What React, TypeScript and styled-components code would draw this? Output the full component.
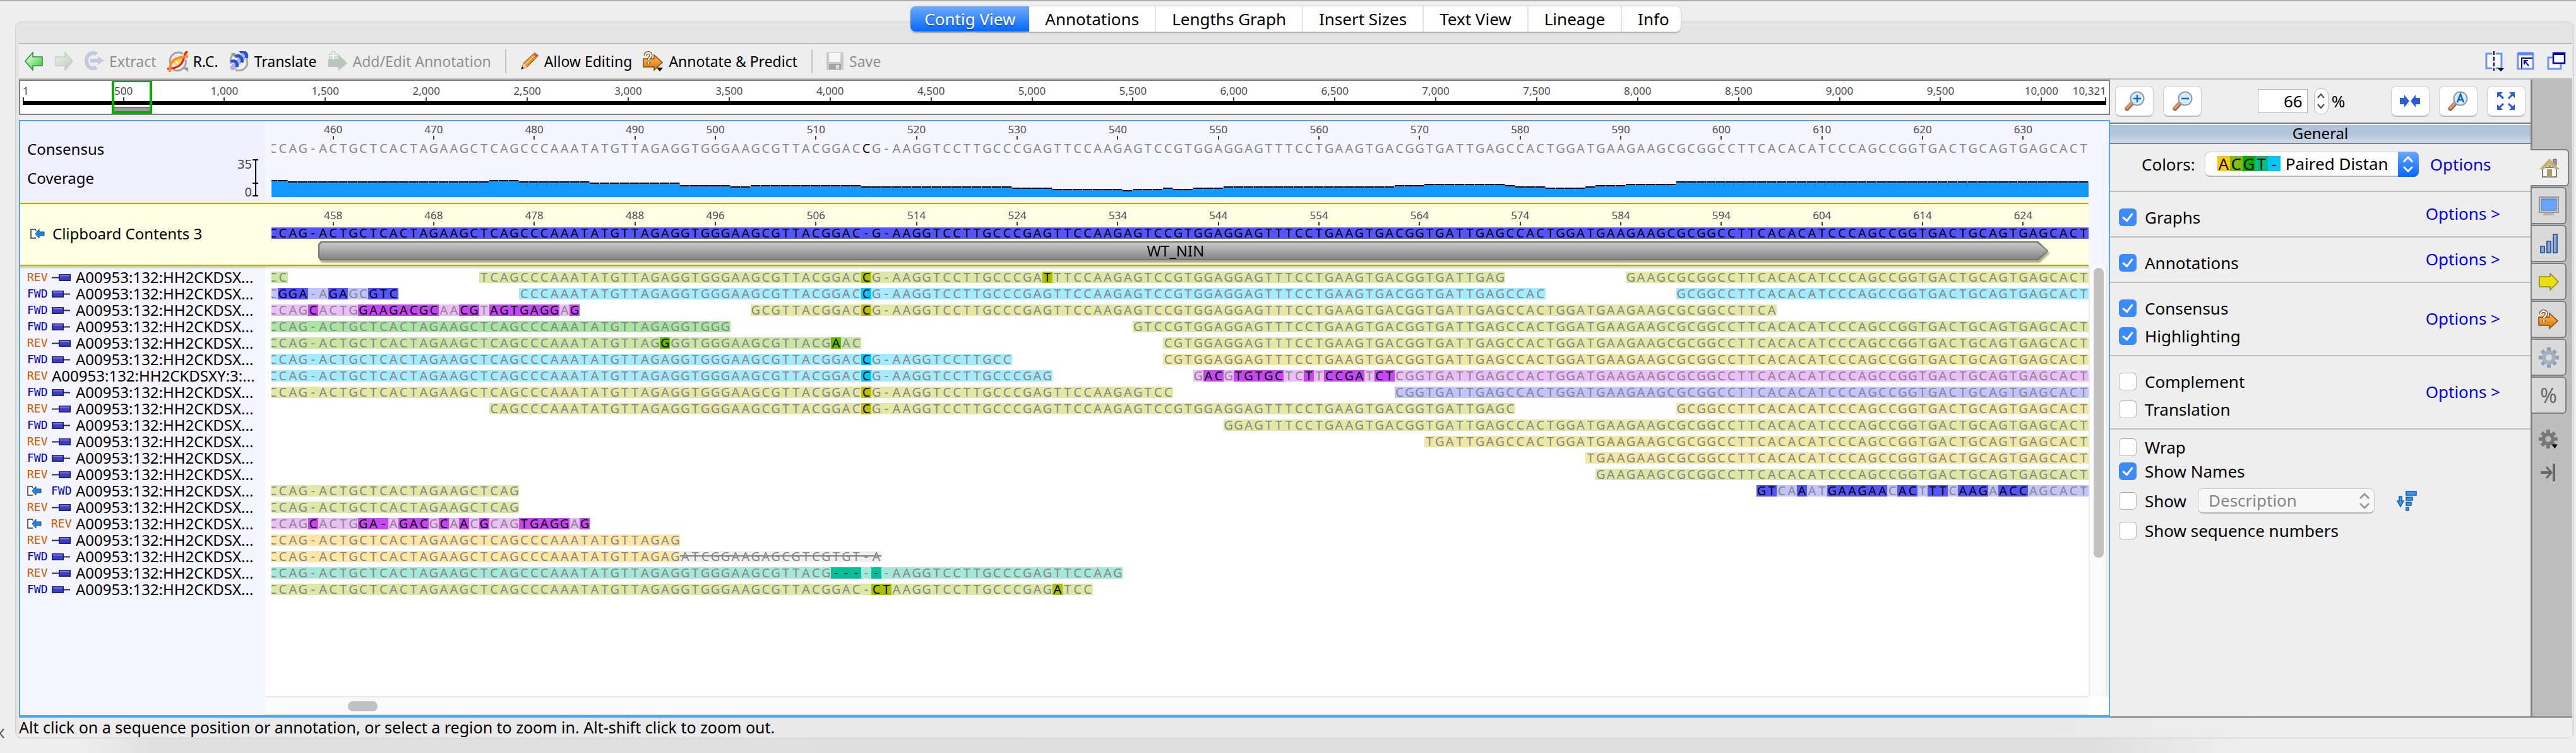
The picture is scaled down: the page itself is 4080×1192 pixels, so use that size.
import React from "react";
import styled, { createGlobalStyle, css } from "styled-components";

/* ---------- sequence data ---------- */

const CONSENSUS =
  "CCAG-ACTGCTCACTAGAAGCTCAGCCCAAATATGTTAGAGGTGGGAAGCGTTACGGACC" +
  "G-AAGGTCCTTGCCCGAGTTCCAAGAGTCCGTGGAGGAGTTTCCTGAAGTGACGGTGATT" +
  "GAGCCACTGGATGAAGAAGCGCGGCCTTCACACATCCCAGCCGGTGACTGCAGTGAGCAC" +
  "T";
const LENGTH = CONSENSUS.length;
const SNP = 59;

const REFERENCE = CONSENSUS.slice(0, SNP) + "-" + CONSENSUS.slice(SNP + 1);

type Range = [number, number];
type Edit = [number, string];
type Tone = { soft: string; hard: string };
type Piece = { at: number; bases: string; tone: Tone; marks: Range[]; trimmed?: boolean };

const tone = (soft: string, hard: string): Tone => ({ soft, hard });
const CYAN = tone("#a5ebff", "#00c8ff");
const VIOLET = tone("#c3c3ff", "#5555ff");
const PURPLE = tone("#ebbef9", "#c547f3");
const GREEN = tone("#a9e4a5", "#1cb400");
const LIME = tone("#c9e6a4", "#66b800");
const LEAF = tone("#dde8a6", "#aabf00");
const MOSS = tone("#e4e8a5", "#bcbf00");
const SAND = tone("#ede8a4", "#d0c000");
const STRAW = tone("#f1e8a5", "#dcc000");
const AMBER = tone("#fee7a3", "#ffc000");
const TEAL = tone("#a5e8da", "#00c09c");
const GREY = tone("#f0f0f0", "#d0d0d0");

// A piece that follows the consensus from one column to another, with a few changed bases.
const follow = (from: number, to: number, t: Tone, edits: Edit[] = [], marks: Range[] = []): Piece => {
  const bases = CONSENSUS.slice(from, to + 1).split("");
  edits.forEach(([at, text]) => text.split("").forEach((b, i) => (bases[at - from + i] = b)));
  return { at: from, bases: bases.join(""), tone: t, marks };
};
const piece = (at: number, bases: string, t: Tone, marks: Range[] = []): Piece => ({ at, bases, tone: t, marks });

const END = LENGTH - 1;
const snp: Range[] = [[SNP, SNP]];
const NAME = "A00953:132:HH2CKDSX...";

type Read = { dir: "FWD" | "REV"; pin?: boolean; linked?: boolean; name?: string; pieces: Piece[] };

const READS: Read[] = [
  { dir: "REV", pin: true, pieces: [follow(0, 1, LIME), follow(21, 122, LEAF, [[77, "T"]], [[59, 59], [77, 77]]), follow(135, END, MOSS)] },
  { dir: "FWD", pin: true, pieces: [piece(0, "CGGA-AGAGCGTC", VIOLET, [[1, 3], [6, 7], [10, 12]]), follow(25, 126, CYAN, [], snp), follow(140, END, CYAN)] },
  { dir: "FWD", pin: true, pieces: [piece(0, "CCAGCACTGGAAGACGCAACGTAGTGAGGAG", PURPLE, [[4, 4], [9, 16], [19, 20], [22, 28], [30, 30]]), follow(48, 149, MOSS, [], snp)] },
  { dir: "FWD", pin: true, pieces: [follow(0, 45, GREEN), follow(86, END, LEAF)] },
  { dir: "REV", pin: true, pieces: [follow(0, 58, LIME, [[39, "G"], [56, "AAC"]], [[39, 39], [56, 56]]), follow(89, END, MOSS)] },
  { dir: "FWD", pin: true, pieces: [follow(0, 73, CYAN, [], snp), follow(89, END, SAND)] },
  { dir: "REV", name: "A00953:132:HH2CKDSXY:3:...", pieces: [follow(0, 77, CYAN, [], snp), follow(92, END, PURPLE, [[92, "GACGTGTGCTCTTCCGATCT"]], [[93, 94], [96, 100], [103, 103], [105, 108], [110, 111]])] },
  { dir: "FWD", pin: true, pieces: [follow(0, 89, MOSS, [], snp), follow(112, END, VIOLET)] },
  { dir: "REV", pin: true, pieces: [follow(22, 123, MOSS, [], snp), follow(140, END, STRAW)] },
  { dir: "FWD", pin: true, pieces: [follow(95, END, MOSS)] },
  { dir: "REV", pin: true, pieces: [follow(115, END, SAND)] },
  { dir: "FWD", pin: true, pieces: [follow(131, END, STRAW)] },
  { dir: "REV", pin: true, pieces: [follow(132, END, LEAF)] },
  { dir: "FWD", linked: true, pieces: [follow(0, 24, MOSS), piece(148, "GTCAAATGAAGAACACTTTCAAGAACCAGCACT", VIOLET, [[148, 149], [152, 152], [155, 160], [162, 163], [165, 166], [168, 170], [172, 174]])] },
  { dir: "REV", pin: true, pieces: [follow(0, 24, LEAF)] },
  { dir: "REV", linked: true, pieces: [piece(0, "CCAGCACTGGA-AGACGCAACGCAGTGAGGAG", PURPLE, [[4, 4], [9, 11], [13, 15], [17, 17], [19, 19], [21, 21], [25, 29], [31, 31]])] },
  { dir: "REV", pin: true, pieces: [follow(0, 40, AMBER)] },
  { dir: "FWD", pin: true, pieces: [follow(0, 40, AMBER), { at: 41, bases: "ATCGGAAGAGCGTCGTGT-A", tone: GREY, marks: [], trimmed: true }] },
  { dir: "REV", pin: true, pieces: [follow(0, 84, TEAL, [[56, "------"]], [[56, 58], [60, 60]])] },
  { dir: "FWD", pin: true, pieces: [follow(0, 81, LEAF, [[59, "-CT"], [78, "ATCC"]], [[60, 61], [78, 78]])] },
];

// Coverage as [last column, bar height] steps.
const COVERAGE_STEPS: Range[] = [
  [1, 27], [21, 25], [24, 27], [31, 25], [40, 23], [45, 19], [47, 17], [58, 19], [73, 17], [77, 15],
  [84, 13], [85, 11], [88, 13], [89, 15], [91, 13], [94, 15], [111, 17], [114, 19], [122, 21], [123, 19],
  [126, 17], [130, 15], [131, 17], [134, 19], [139, 21], [180, 25],
];
const COVERAGE = Array.from({ length: LENGTH }, (_, i) => COVERAGE_STEPS.find(([last]) => i <= last)![1]);

const TICK_COLUMNS = [6, 16, 26, 36, 44, 54, 64, 74, 84, 94, 104, 114, 124, 134, 144, 154, 164, 174];
const CONSENSUS_TICKS = TICK_COLUMNS.map((_, i) => 460 + i * 10);
const REFERENCE_TICKS = [458, 468, 478, 488, 496, 506, 514, 524, 534, 544, 554, 564, 574, 584, 594, 604, 614, 624];

/* ---------- page frame ---------- */

const GlobalStyle = createGlobalStyle`
  *, *::before, *::after { box-sizing: border-box; }
  body { margin: 0; background: #eeeeee; }
  body, button, input, select { font-family: "Noto Sans", "Open Sans", sans-serif; }
  button { padding: 0; border: 0; background: none; color: inherit; font-size: inherit; }
  svg { display: block; flex: none; }
`;

const Page = styled.div`
  position: relative;
  display: flex;
  flex-direction: column;
  min-height: 100vh;
  padding: 32px 3px 0 24px;
  border-top: 2px solid #b0b0b0;
  background: #eeeeee;
  color: #000;
  font-size: 26px;
  line-height: 30px;
  overflow: hidden;
`;

const Panel = styled.main`
  flex: 1;
  display: flex;
  flex-direction: column;
  padding: 0 2px 1px 5px;
  border: 1px solid #d2d2d2;
  border-radius: 10px;
  background: #e4e4e4;
`;

const BottomShade = styled.div`
  height: 23px;
  margin: 0 -3px 0 -24px;
  background: linear-gradient(90deg, #eeeeee 3%, #e0e0e0 6%, #dedede 81%, #eeeeee 87%);
`;

const TabBar = styled.nav`
  align-self: center;
  display: flex;
  height: 40px;
  margin: -25px 0 18px;
  border-radius: 8px;
  background: #fff;
  box-shadow: 0 0 0 1px #cfcfcf, 0 2px 2px #a0a0a0;
`;

const Tab = styled.button<{ $on?: boolean }>`
  padding: 0 25px;
  border-right: 2px solid #e2e2e2;
  line-height: 38px;
  white-space: nowrap;
  &:last-child { padding-right: 18px; border-right: 0; }
  ${p => p.$on && css`
    padding: 0 22px;
    border-right: 0;
    border-radius: 8px 0 0 8px;
    background: linear-gradient(#6fabff, #0367ff);
    color: #fff;
    text-shadow: 0 2px 1px rgba(0, 0, 60, 0.4);
  `}
`;

const Frame = styled.div`
  flex: 1;
  display: flex;
  flex-direction: column;
  border-top: 2px solid #bcbcbc;
  background: #eeeeee;
`;

/* ---------- toolbar ---------- */

const Toolbar = styled.div`
  display: flex;
  align-items: center;
  gap: 17px;
  height: 56px;
  padding: 0 10px 0 9px;
  border-bottom: 2px solid #bcbcbc;
  font-size: 23px;
`;

const ToolButton = styled.button<{ $off?: boolean }>`
  display: flex;
  align-items: center;
  gap: 8px;
  white-space: nowrap;
  color: ${p => (p.$off ? "#8e8e8e" : "#000")};
`;

const Separator = styled.span`
  width: 2px;
  height: 38px;
  margin: 0 5px;
  background: #c4c4c4;
`;

const ToolbarEnd = styled.div`
  display: flex;
  gap: 20px;
  margin-left: auto;
`;

/* ---------- body ---------- */

const Body = styled.div`
  flex: 1;
  display: grid;
  grid-template-columns: minmax(0, 1fr) 732px;
`;

const Main = styled.section`
  display: flex;
  flex-direction: column;
`;

const Overview = styled.div`
  position: relative;
  height: 56px;
  margin-bottom: 8px;
  padding: 8px 4px 0 4px;
  border: 2px solid #808080;
  background: #fff;
`;

const OverviewRuler = styled.div`
  display: grid;
  grid-template-columns: 499fr repeat(19, 500fr) 321fr;
  height: 24px;
`;

const OverviewCell = styled.div`
  display: flex;
  justify-content: space-between;
`;

const Tick = styled.span<{ $align?: "start" | "end" }>`
  display: flex;
  flex-direction: column;
  align-items: ${p => p.$align ?? "center"};
  width: 0;
  color: #4a4a4a;
  font-size: 17px;
  line-height: 16px;
  white-space: nowrap;
  &::after {
    content: "";
    flex: none;
    width: 2px;
    height: 6px;
    margin-top: 2px;
    background: #444;
  }
`;

const OverviewBar = styled.div`
  height: 6px;
  background: #000;
`;

const OverviewWindow = styled.div`
  position: absolute;
  top: 0;
  bottom: 0;
  border: solid #00b000;
  border-width: 2px 4px 4px;
  display: flex;
  align-items: flex-end;
  &::after {
    content: "";
    flex: 1;
    height: 7px;
    background: #979797;
    border-top: 2px solid #777;
  }
`;

const Viewer = styled.div`
  flex: 1;
  display: flex;
  flex-direction: column;
  border: 2px solid #52a5e6;
  border-bottom-width: 4px;
  background: #fff;
`;

const Band = styled.div`
  display: grid;
  grid-template-columns: 388px minmax(0, 1fr) 32px;
  background: #f5f5ff;
`;

const BandNames = styled.div<{ $reference?: boolean }>`
  padding: ${p => (p.$reference ? "35px 0 0 16px" : "32px 0 0 11px")};
  border-bottom: 2px solid #b3b300;
  background: ${p => (p.$reference ? "#ffffe3" : "#f0f0ff")};
  font-size: 24px;
  line-height: 24px;
`;

const BandLane = styled.div<{ $reference?: boolean }>`
  padding: ${p => (p.$reference ? "0 0 7px 10px" : "0 0 9px 10px")};
  border-bottom: 2px solid #b3b300;
  background: ${p => (p.$reference ? "#ffffe3" : "#f5f5ff")};
`;

const Clip = styled.div<{ $reference?: boolean }>`
  padding: ${p => (p.$reference ? "8px 0 6px" : "3px 0 0")};
  overflow: hidden;
`;

const columns = css`
  display: grid;
  grid-template-columns: repeat(${LENGTH}, minmax(0, 1fr));
  margin-left: -6px;
`;

const RulerStrip = styled.div<{ $gap: number }>`
  ${columns}
  height: 26px;
  margin-bottom: ${p => p.$gap}px;
`;

const RulerMark = styled.span`
  display: flex;
  flex-direction: column;
  align-items: center;
  color: #4a4a4a;
  font-size: 17px;
  line-height: 20px;
  &::after {
    content: "";
    width: 2px;
    height: 6px;
    background: #444;
  }
`;

const BaseStrip = styled.div`
  ${columns}
  height: 18px;
  font-size: 20px;
  line-height: 18px;
`;

const Base = styled.span<{ $bg?: string; $dark?: boolean; $struck?: boolean }>`
  display: flex;
  justify-content: center;
  background: ${p => p.$bg ?? "transparent"};
  color: ${p => (p.$dark ? "#000" : "#868686")};
  ${p => p.$struck && css`
    background: linear-gradient(transparent 7px, #808080 7px, #808080 9px, transparent 9px), ${p.$bg};
  `}
`;

const CoverageStrip = styled.div`
  ${columns}
  align-items: end;
  height: 68px;
`;

const CoverageBar = styled.i`
  background: linear-gradient(90deg, #000 calc(100% - 1px), #8899aa 0) top / 100% 2px no-repeat #1199ff;
`;

const CoverageLabel = styled.div`
  display: flex;
  justify-content: space-between;
  padding: 4px 11px 0 0;
  & > span { margin-top: 18px; }
`;

const CoverageScale = styled.div`
  display: grid;
  grid-template-columns: auto 9px;
  gap: 0 1px;
  height: 60px;
  color: #444;
  font-size: 20px;
  line-height: 16px;
`;

const ScaleNumbers = styled.div`
  display: flex;
  flex-direction: column;
  justify-content: space-between;
  text-align: right;
`;

const ReferenceName = styled.div`
  display: flex;
  align-items: center;
  gap: 12px;
`;

const AnnotationStrip = styled.div`
  ${columns}
  height: 30px;
  margin-top: -2px;
`;

const AnnotationShadow = styled.div`
  grid-column: 6 / 178;
  display: grid;
  filter: drop-shadow(2px 4px 1px rgba(90, 90, 60, 0.5));
`;

const arrowShape = css`
  clip-path: polygon(4px 0, calc(100% - 16px) 0, 100% 50%, calc(100% - 16px) 100%, 4px 100%, 0 84%, 0 16%);
`;

const AnnotationEdge = styled.div`
  ${arrowShape}
  display: grid;
  padding: 2px;
  background: #747474;
`;

const AnnotationFill = styled.div`
  ${arrowShape}
  padding-right: 24px;
  background: linear-gradient(#c9c9c9, #858585);
  font-size: 24px;
  line-height: 26px;
  text-align: center;
`;

const ReadsArea = styled.div`
  flex: 1;
  display: grid;
  grid-template-columns: 388px minmax(0, 1fr) 32px;
  grid-template-rows: minmax(0, 1fr) 30px;
`;

const topShade = css`
  padding-top: 5px;
  background-image: linear-gradient(rgba(130, 130, 130, 0.45), rgba(200, 200, 200, 0.1));
  background-size: 100% 5px;
  background-repeat: no-repeat;
`;

const NameList = styled.div`
  ${topShade}
  grid-row: 1 / 3;
  background-color: #f5f5ff;
`;

const NameRow = styled.div`
  display: flex;
  align-items: center;
  height: 26px;
  padding-left: 11px;
  font-size: 24px;
  line-height: 26px;
  white-space: nowrap;
`;

const Slot = styled.span`
  display: flex;
  width: 38px;
`;

const Direction = styled.span<{ $rev?: boolean }>`
  width: 39px;
  color: ${p => (p.$rev ? "#c85a00" : "#0000c0")};
  font-family: "DejaVu Sans Mono", "Liberation Mono", monospace;
  font-size: 18px;
  line-height: 22px;
`;

const Lanes = styled.div`
  ${topShade}
  padding-left: 10px;
`;

const ReadLane = styled.div`
  height: 26px;
  padding-top: 4px;
  overflow: hidden;
`;

const VScroll = styled.div`
  padding: 3px 8px;
  border: solid #e6e6e6;
  border-width: 0 2px;
  border-left-color: #ececec;
  background: #fafafa;
  margin-right: 2px;
  &::after {
    content: "";
    display: block;
    width: 16px;
    margin-left: -2px;
    height: 68%;
    border-radius: 8px;
    background: #c1c1c1;
  }
`;

const HScroll = styled.div`
  padding: 6px 0 0 131px;
  border: solid #e6e6e6;
  border-width: 2px 0;
  background: #fafafa;
  &::after {
    content: "";
    display: block;
    width: 47px;
    height: 16px;
    border-radius: 8px;
    background: #c1c1c1;
  }
`;

const Status = styled.footer`
  height: 31px;
  font-size: 25px;
  line-height: 31px;
  background: linear-gradient(90deg, #eeeeee 0, #e9e9e9 8%, #e9e9e9 80%, #eeeeee 88%);
`;

/* ---------- options sidebar ---------- */

const Sidebar = styled.aside`
  display: grid;
  grid-template-columns: 666px 66px;
  border-bottom: 2px solid #808080;
`;

const Options = styled.div`
  display: flex;
  flex-direction: column;
`;

const ZoomBar = styled.div`
  display: flex;
  align-items: center;
  justify-content: space-between;
  height: 68px;
  padding: 0 8px;
`;

const ZoomGroup = styled.div<{ $gap: number }>`
  display: flex;
  align-items: center;
  gap: ${p => p.$gap}px;
`;

const SquareButton = styled.button`
  display: grid;
  place-items: center;
  width: 61px;
  height: 49px;
  border: 1px solid #cdcdcd;
  border-bottom: 2px solid #b8b8b8;
  border-radius: 8px;
  background: #fff;
`;

const ZoomLabel = styled.label`
  display: flex;
  align-items: center;
  padding-left: 80px;
  margin-right: 64px;
`;

const ZoomInput = styled.input`
  width: 79px;
  height: 38px;
  margin-right: 10px;
  padding: 0 7px;
  border: 1px solid #b4b4b4;
  background: #fff;
  font-size: 26px;
  text-align: right;
`;

const Stepper = styled.span`
  display: flex;
  flex-direction: column;
  align-items: center;
  justify-content: space-evenly;
  width: 23px;
  height: 41px;
  margin-right: 5px;
  border: 1px solid #b8b8b8;
  border-radius: 10px;
  background: #fff;
`;

const SectionTitle = styled.h2`
  height: 34px;
  margin: 0;
  border-top: 2px solid #6c7b8c;
  border-bottom: 2px solid #7c8088;
  background: linear-gradient(#fff 2px, #b0c3da 2px, #b0c3da 50%, #cfdbea);
  font-size: 24px;
  font-weight: 400;
  line-height: 30px;
  text-align: center;
`;

const Section = styled.div<{ $first?: boolean; $last?: boolean }>`
  display: flex;
  align-items: center;
  justify-content: space-between;
  padding: ${p => (p.$last ? "14px 0 0 14px" : p.$first ? "12px 48px 22px 50px" : "26px 48px 16px 14px")};
  border-bottom: ${p => (p.$last ? "0" : "2px solid #bfbfbf")};
`;

const Checks = styled.div<{ $gap: number }>`
  display: flex;
  flex-direction: column;
  gap: ${p => p.$gap}px;
`;

const CheckLabel = styled.label`
  display: flex;
  align-items: center;
  gap: 13px;
  height: 28px;
  white-space: nowrap;
`;

const Checkbox = styled.input`
  appearance: none;
  width: 28px;
  height: 28px;
  margin: 0;
  border: 1px solid #b9b9b9;
  border-top-color: #a4a4a4;
  border-radius: 6px;
  background: #fff;
  display: grid;
  place-items: center;
  &:checked { border: 0; background: #3b8bff; }
  &:checked::after {
    content: "";
    width: 10px;
    height: 16px;
    margin-bottom: 4px;
    border: solid #fff;
    border-width: 0 3px 3px 0;
    transform: rotate(38deg);
  }
`;

const OptionsLink = styled.a<{ $raised?: boolean }>`
  margin-bottom: ${p => (p.$raised ? "12px" : "0")};
  color: #0000ee;
  line-height: 16px;
  text-decoration: none;
  white-space: nowrap;
`;

const ColorField = styled.div`
  display: flex;
  align-items: center;
  height: 40px;
`;

const SelectWrap = styled.span<{ $muted?: boolean }>`
  position: relative;
  display: flex;
  width: ${p => (p.$muted ? 280 : 339)}px;
  height: 40px;
  margin: ${p => (p.$muted ? "0 0 0 18px" : "0 18px 0 15px")};
`;

const Select = styled.select<{ $muted?: boolean }>`
  appearance: none;
  width: 100%;
  padding: ${p => (p.$muted ? "0 40px 2px 16px" : "0 46px 4px 127px")};
  border: 1px solid #cccccc;
  border-bottom: 2px solid #b5b5b5;
  border-radius: 8px;
  background: ${p => (p.$muted ? "#f7f7f7" : "#fff")};
  color: ${p => (p.$muted ? "#868686" : "#000")};
  font-size: 26px;
  opacity: 1;
`;

const SelectArrows = styled.span<{ $muted?: boolean }>`
  position: absolute;
  top: 0;
  right: 0;
  bottom: 0;
  display: grid;
  place-items: center;
  width: 33px;
  border-radius: 0 8px 8px 0;
  background: ${p => (p.$muted ? "transparent" : "linear-gradient(#6aa8ff, #0367ff)")};
  pointer-events: none;
`;

const Swatches = styled.span`
  position: absolute;
  top: 7px;
  left: 20px;
  display: grid;
  grid-template-columns: repeat(5, 20px);
  line-height: 24px;
  text-align: center;
  pointer-events: none;
`;

const Swatch = styled.span<{ $color: string }>`
  height: 24px;
  background: ${p => p.$color};
`;

const ShowRow = styled.div`
  display: flex;
  align-items: center;
  height: 40px;
  margin: 3px 0;
`;

const SortButton = styled.button`
  margin-left: 35px;
`;

/* ---------- icon rail ---------- */

const Rail = styled.div`
  display: flex;
  flex-direction: column;
  align-items: flex-start;
  padding-top: 110px;
  background: linear-gradient(90deg, #808080 2px, #adadad 2px, #adadad 4px, #bdbdbd 4px);
`;

const RailTab = styled.button<{ $on?: boolean }>`
  display: grid;
  place-items: center;
  width: ${p => (p.$on ? 61 : 55)}px;
  height: 59px;
  margin: 0 0 1px ${p => (p.$on ? 0 : 2)}px;
  border: 2px solid #808080;
  border-left: 0;
  border-radius: 0 6px 6px 0;
  background: ${p => (p.$on ? "#eeeeee" : "#d9d9d9")};
  color: #666;
  font-size: 32px;
`;

const RailAction = styled.button`
  margin: 24px 0 0 13px;
`;

const EdgeGlyph = styled.svg`
  position: absolute;
  left: 0;
  bottom: 23px;
`;

/* ---------- icons ---------- */

const ArrowIcon = ({ flip, soft }: { flip?: boolean; soft?: boolean }) => (
  <svg width="30" height="30" viewBox="0 0 30 30">
    <defs>
      <linearGradient id={soft ? "arS" : "arG"} x1="0" y1="0" x2="1" y2="1">
        <stop offset="0.2" stopColor={soft ? "#e3ebe3" : "#d3f7d0"} />
        <stop offset="1" stopColor={soft ? "#bccabc" : "#35c43a"} />
      </linearGradient>
    </defs>
    <path
      d={flip ? "M29 15 17 1V8H2V22H17V29Z" : "M1 15 13 1V8H28V22H13V29Z"}
      fill={`url(#${soft ? "arS" : "arG"})`}
      stroke={soft ? "#c3cdc3" : "#219a2c"}
      strokeWidth="1.5"
    />
  </svg>
);

const ExtractIcon = () => (
  <svg width="32" height="32" viewBox="0 0 32 32" fill="none" stroke="#c3cadd">
    <path d="M20 5C15 1 4 3 4 15S14 29 20 26" strokeWidth="6" />
    <path d="M10 15H24" strokeWidth="6" />
    <path d="M22 8 32 15 22 22Z" fill="#c3cadd" stroke="none" />
  </svg>
);

const RecycleRing = () => (
  <>
    <path d="M5 20A13 13 0 0 1 24 4M28 13A13 13 0 0 1 9 28" fill="none" stroke="#a3a3a3" strokeWidth="3" />
    <path d="M23 25H32V32Z" fill="#999" />
  </>
);

const ReverseComplementIcon = () => (
  <svg width="33" height="33" viewBox="0 0 32 32">
    <RecycleRing />
    <path d="M8 14 14 21M12 11 19 19M17 10 22 16M27 1 31 6" stroke="#ffd21c" strokeWidth="3" />
    <path d="M0 27C16 27 24 21 26 8 27 4 28 2 31 0" fill="none" stroke="#ee1414" strokeWidth="3" />
    <path d="M4 32C3 16 10 9 32 8" fill="none" stroke="#ff8a2a" strokeWidth="4" />
  </svg>
);

const TranslateIcon = () => (
  <svg width="32" height="32" viewBox="0 0 32 32">
    <path d="M3 20C1 12 3 8 7 4M27 12C33 24 22 33 10 30" fill="none" stroke="#a8a8a8" strokeWidth="3" />
    <path d="M2 3H10V11Z" fill="#999" />
    <path d="M6 26 25 6" stroke="#b4aee6" strokeWidth="9" strokeLinecap="round" />
    <path d="M3 17C7 13 14 17 12 25M10 9C15 5 22 10 20 18M17 2C22-2 30 4 27 11" fill="none" stroke="#2454d2" strokeWidth="5" />
  </svg>
);

const AddAnnotationIcon = () => (
  <svg width="32" height="32" viewBox="0 0 32 32">
    <path d="M1 12H17V5L31 19 17 31V25H1Z" fill="#b9c6ba" />
    <path d="M9 0V14M2 7H16" stroke="#c3cdc4" strokeWidth="6" />
    <path d="M9 1V13M3 7H15" stroke="#f3f6f3" strokeWidth="3" />
  </svg>
);

const PencilIcon = () => (
  <svg width="30" height="28" viewBox="0 0 30 28">
    <path d="M2 26 5 17 20 3 26 8 11 23Z" fill="#e88b25" stroke="#9b4c10" />
    <path d="M8 19 22 5" stroke="#ffc977" strokeWidth="2" />
    <path d="M20 3 23 0 29 5 26 8Z" fill="#e0565a" stroke="#993" />
    <path d="M2 26 5 17 11 23Z" fill="#eccfa4" />
    <path d="M1 27 3 22 6 25Z" fill="#222" />
  </svg>
);

const PredictIcon = ({ menu }: { menu?: boolean }) => (
  <svg width="33" height="32" viewBox="0 0 33 32">
    <defs>
      <linearGradient id="pred" x1="0" y1="0" x2="0" y2="1">
        <stop offset="0" stopColor="#ffb95c" />
        <stop offset="1" stopColor="#d87505" />
      </linearGradient>
    </defs>
    <path d="M1 12H18V6L31 18 18 30V25H1Z" fill="url(#pred)" stroke="#8a4b06" strokeWidth="1.5" />
    <path d="M4 7C4 1 14 1 13 7 13 11 9 10 9 14M9 17V20" fill="none" stroke="#7a4307" strokeWidth="5" />
    <path d="M4 7C4 1 14 1 13 7 13 11 9 10 9 14M9 17V20" fill="none" stroke="#fff" strokeWidth="2.5" />
    {menu && <path d="M22 26H32L27 32Z" fill="#000" />}
  </svg>
);

const SaveIcon = () => (
  <svg width="28" height="28" viewBox="0 0 28 28">
    <path d="M0 0H27V28H0Z" fill="#c9c9c9" />
    <path d="M4 1H22V15H4Z" fill="#f5f5f5" />
    <path d="M4 18H23V27H4Z" fill="#a2a2a2" />
    <path d="M15 20H20V26H15Z" fill="#dedede" />
  </svg>
);

const SplitIcon = () => (
  <svg width="30" height="32" viewBox="0 0 30 32" fill="none">
    <path d="M2 4H26V27H2Z" fill="#fff" stroke="#6f92ff" strokeWidth="3" />
    <path d="M14 0V31" stroke="#eee" strokeWidth="6" />
    <path d="M14 0V31" stroke="#0000a8" strokeWidth="2" strokeDasharray="6 3" />
    <path d="M20 27H30L25 32Z" fill="#000" />
  </svg>
);

const PopInIcon = () => (
  <svg width="28" height="30" viewBox="0 0 28 30" fill="none">
    <path d="M2 3H26V27H2Z" fill="#fff" stroke="#6f92ff" strokeWidth="3" />
    <path d="M2 3H26" stroke="#5a82ff" strokeWidth="5" />
    <path d="M8 26V10H25M12 14 19 22M12 20V14H18" stroke="#0000a8" strokeWidth="2" />
  </svg>
);

const WindowsIcon = () => (
  <svg width="30" height="30" viewBox="0 0 30 30" fill="none">
    <path d="M2 9H22V27H2Z" fill="#fff" stroke="#6f92ff" strokeWidth="3" />
    <path d="M10 2H28V18H10Z" fill="#fff" stroke="#0000b8" strokeWidth="2.5" />
    <path d="M9 3H29" stroke="#0000b8" strokeWidth="4" />
  </svg>
);

const Magnifier = ({ sign }: { sign: "plus" | "minus" | "auto" }) => (
  <svg width="32" height="32" viewBox="0 0 32 32">
    <path d="M4 28 13 18" stroke="#9a6040" strokeWidth="7" strokeLinecap="round" />
    <path d="M4 27 12 18" stroke="#dc9a74" strokeWidth="4" strokeLinecap="round" />
    <circle cx="20" cy="12" r="10.5" fill="#d3ecff" stroke="#8c9cab" strokeWidth="2" />
    {sign !== "auto" && <path d="M14 12H26" stroke="#1266c4" strokeWidth="2.5" />}
    {sign === "plus" && <path d="M20 6V18" stroke="#1266c4" strokeWidth="2.5" />}
    {sign === "auto" && <path d="M15 18 20 5 25 18M17 14H23" fill="none" stroke="#1266c4" strokeWidth="2.5" />}
  </svg>
);

const SqueezeIcon = () => (
  <svg width="32" height="20" viewBox="0 0 32 20" fill="#2c5bd8">
    <path d="M0 5H7V0L15 10 7 20V15H0ZM32 5H25V0L17 10 25 20V15H32Z" />
  </svg>
);

const ExpandIcon = () => (
  <svg width="28" height="28" viewBox="0 0 28 28" fill="#2c5bd8" stroke="#2c5bd8" strokeWidth="3">
    <path d="M3 3 10 10M25 3 18 10M3 25 10 18M25 25 18 18" />
    <path d="M0 0H9L0 9ZM28 0V9L19 0ZM0 28V19L9 28ZM28 28H19L28 19Z" stroke="none" />
  </svg>
);

const Chevron = ({ down, color = "#444" }: { down?: boolean; color?: string }) => (
  <svg width="12" height="8" viewBox="0 0 12 8" fill="none" stroke={color} strokeWidth="2">
    <path d={down ? "M1 1 6 7 11 1" : "M1 7 6 1 11 7"} />
  </svg>
);

const UpDown = ({ color }: { color: string }) => (
  <svg width="16" height="26" viewBox="0 0 16 26" fill="none" stroke={color} strokeWidth="3">
    <path d="M1 9 8 2 15 9M1 17 8 24 15 17" />
  </svg>
);

const SortIcon = () => (
  <svg width="32" height="32" viewBox="0 0 32 32" fill="#3b97ec" stroke="#125aa5" strokeWidth="1.5">
    <path d="M4 9H8V16H11L6 25 1 16H4Z" />
    <path d="M15 1H31V7H15ZM15 10H25V15H15ZM15 18H23V23H15ZM15 26H19V31H15Z" />
  </svg>
);

const HomeIcon = () => (
  <svg width="32" height="30" viewBox="0 0 32 30">
    <path d="M22 1H27V10H22Z" fill="#999" stroke="#555" />
    <path d="M5 14H27V29H5Z" fill="#fbfbf7" stroke="#555" strokeWidth="1.5" />
    <path d="M0 17 16 0 32 17H25L16 8 7 17Z" fill="#c6ae74" />
    <path d="M12 17H20V29H12ZM14 10H18V14H14Z" fill="#b49a5c" />
  </svg>
);

const MonitorIcon = () => (
  <svg width="32" height="30" viewBox="0 0 32 30">
    <path d="M1 1H31V25H1Z" fill="#d7d7d7" stroke="#969696" strokeWidth="2" />
    <path d="M4 4H28V22H4Z" fill="#6aa4fa" stroke="#446dad" />
    <path d="M9 26H23L26 30H6Z" fill="#b4b4b4" />
  </svg>
);

const BarsIcon = () => (
  <svg width="30" height="31" viewBox="0 0 30 31" fill="#88abdc" stroke="#3d5c96" strokeWidth="2">
    <path d="M2 20H8V30H2ZM12 12H18V30H12ZM22 1H28V30H22Z" />
  </svg>
);

const YellowArrowIcon = () => (
  <svg width="32" height="28" viewBox="0 0 32 28">
    <path d="M1 6H18V1L31 14 18 27V22H1Z" fill="#ece010" stroke="#8f8600" strokeWidth="1.5" />
  </svg>
);

const GearIcon = ({ dark, size }: { dark?: boolean; size: number }) => (
  <svg width={size} height={size} viewBox="0 0 32 32">
    <g stroke={dark ? "#777" : "#8f9fb6"} strokeWidth="6">
      <path d="M16 0V32M0 16H32M5 5 27 27M27 5 5 27" />
    </g>
    <circle cx="16" cy="16" r="11" fill={dark ? "#777" : "#a4b1c5"} />
    <circle cx="16" cy="16" r="5" fill={dark ? "#bdbdbd" : "#dadada"} />
    {dark && <path d="M22 25H32L27 32Z" fill="#000" />}
  </svg>
);

const CollapseIcon = () => (
  <svg width="28" height="28" viewBox="0 0 28 28" fill="none" stroke="#666">
    <path d="M3 14H20" strokeWidth="4" />
    <path d="M12 5 20 14 12 23" strokeWidth="3" />
    <path d="M24 0V28" strokeWidth="4" />
  </svg>
);

const ImportIcon = () => (
  <svg width="23" height="16" viewBox="0 0 23 16">
    <path d="M9 1H1V15H9" fill="#fff" stroke="#333" strokeWidth="1.5" />
    <path d="M7 1 11 5" stroke="#333" />
    <path d="M8 8 14 1V5H22V11H14V15Z" fill="#1c86e0" stroke="#0b5196" />
  </svg>
);

const PinIcon = ({ rev }: { rev?: boolean }) => (
  <svg width="30" height="11" viewBox="0 0 30 11">
    <path d={rev ? "M0 5.5H12" : "M18 5.5H29"} stroke="#26267c" strokeWidth="2" />
    <rect x={rev ? 12 : 1} y="1" width="17" height="9" fill="#3d3dcc" stroke="#26267c" strokeWidth="2" />
    <path d={rev ? "M13 2.5H28" : "M2 2.5H17"} stroke="#7c7ce4" strokeWidth="2" />
  </svg>
);

const AxisIcon = () => (
  <svg width="9" height="60" viewBox="0 0 9 60" stroke="#000" strokeWidth="2">
    <path d="M5 0V59M0 1H9M0 38H9M0 58H9" />
  </svg>
);

/* ---------- composed parts ---------- */

const Ruler = ({ labels, gap }: { labels: number[]; gap: number }) => (
  <RulerStrip $gap={gap}>
    {TICK_COLUMNS.map((c, i) => (
      <RulerMark key={c} style={{ gridColumn: `${c} / span 3` }}>{labels[i]}</RulerMark>
    ))}
  </RulerStrip>
);

const PieceBases = ({ data }: { data: Piece }) => (
  <>
    {data.bases.split("").map((b, i) => {
      const at = data.at + i;
      const hit = data.marks.some(([a, z]) => at >= a && at <= z);
      return (
        <Base
          key={at}
          $bg={hit ? data.tone.hard : data.tone.soft}
          $dark={hit}
          $struck={data.trimmed}
          style={i === 0 ? { gridColumnStart: at + 1 } : undefined}
        >
          {b}
        </Base>
      );
    })}
  </>
);

const Check = ({ label, checked }: { label: string; checked?: boolean }) => (
  <CheckLabel>
    <Checkbox type="checkbox" defaultChecked={checked} />
    {label}
  </CheckLabel>
);

const TABS = ["Contig View", "Annotations", "Lengths Graph", "Insert Sizes", "Text View", "Lineage", "Info"];
const SWATCHES: [string, string][] = [["A", "#ffc800"], ["C", "#80c000"], ["G", "#00b400"], ["T", "#00c080"], ["-", "#00c8ff"]];
const OVERVIEW_LABELS = Array.from({ length: 20 }, (_, i) => ((i + 1) * 500).toLocaleString("en-US"));
const GENOME = 10321;

export default function App() {
  return (
    <Page>
      <GlobalStyle />
      <Panel>
        <TabBar>
          {TABS.map((t, i) => <Tab key={t} $on={i === 0}>{t}</Tab>)}
        </TabBar>
        <Frame>
          <Toolbar>
            <ToolButton aria-label="Back"><ArrowIcon /></ToolButton>
            <ToolButton aria-label="Forward"><ArrowIcon flip soft /></ToolButton>
            <ToolButton $off><ExtractIcon />Extract</ToolButton>
            <ToolButton><ReverseComplementIcon />R.C.</ToolButton>
            <ToolButton><TranslateIcon />Translate</ToolButton>
            <ToolButton $off><AddAnnotationIcon />Add/Edit Annotation</ToolButton>
            <Separator />
            <ToolButton><PencilIcon />Allow Editing</ToolButton>
            <ToolButton><PredictIcon menu />Annotate &amp; Predict</ToolButton>
            <Separator />
            <ToolButton $off><SaveIcon />Save</ToolButton>
            <ToolbarEnd>
              <ToolButton aria-label="Split view"><SplitIcon /></ToolButton>
              <ToolButton aria-label="Expand view"><PopInIcon /></ToolButton>
              <ToolButton aria-label="New window"><WindowsIcon /></ToolButton>
            </ToolbarEnd>
          </Toolbar>

          <Body>
            <Main>
              <Overview>
                <OverviewRuler>
                  <OverviewCell><Tick $align="start">1</Tick></OverviewCell>
                  {OVERVIEW_LABELS.map((l, i) => (
                    <OverviewCell key={l}>
                      <Tick>{l}</Tick>
                      {i === 19 && <Tick $align="end">10,321</Tick>}
                    </OverviewCell>
                  ))}
                </OverviewRuler>
                <OverviewBar />
                <OverviewWindow style={{ left: `${(452 / GENOME) * 100}%`, width: `${(200 / GENOME) * 100}%` }} />
              </Overview>

              <Viewer>
                <Band>
                  <BandNames>
                    Consensus
                    <CoverageLabel>
                      <span>Coverage</span>
                      <CoverageScale>
                        <ScaleNumbers><span>35</span><span>0</span></ScaleNumbers>
                        <AxisIcon />
                      </CoverageScale>
                    </CoverageLabel>
                  </BandNames>
                  <BandLane>
                    <Clip>
                      <Ruler labels={CONSENSUS_TICKS} gap={5} />
                      <BaseStrip>
                        {CONSENSUS.split("").map((b, i) => <Base key={i} $dark={i === SNP}>{b}</Base>)}
                      </BaseStrip>
                      <CoverageStrip>
                        {COVERAGE.map((h, i) => <CoverageBar key={i} style={{ height: h }} />)}
                      </CoverageStrip>
                    </Clip>
                  </BandLane>
                </Band>

                <Band>
                  <BandNames $reference>
                    <ReferenceName><ImportIcon />Clipboard Contents 3</ReferenceName>
                  </BandNames>
                  <BandLane $reference>
                    <Clip $reference>
                      <Ruler labels={REFERENCE_TICKS} gap={3} />
                      <BaseStrip>
                        {REFERENCE.split("").map((b, i) => <Base key={i} $bg={VIOLET.hard} $dark>{b}</Base>)}
                      </BaseStrip>
                    </Clip>
                    <AnnotationStrip>
                      <AnnotationShadow>
                        <AnnotationEdge><AnnotationFill>WT_NIN</AnnotationFill></AnnotationEdge>
                      </AnnotationShadow>
                    </AnnotationStrip>
                  </BandLane>
                </Band>

                <ReadsArea>
                  <NameList>
                    {READS.map((r, i) => (
                      <NameRow key={i}>
                        {r.linked && <Slot><ImportIcon /></Slot>}
                        <Direction $rev={r.dir === "REV"}>{r.dir}</Direction>
                        {r.pin && <Slot><PinIcon rev={r.dir === "REV"} /></Slot>}
                        {r.name ?? NAME}
                      </NameRow>
                    ))}
                  </NameList>
                  <Lanes>
                    {READS.map((r, i) => (
                      <ReadLane key={i}>
                        <BaseStrip>
                          {r.pieces.map(p => <PieceBases key={p.at} data={p} />)}
                        </BaseStrip>
                      </ReadLane>
                    ))}
                  </Lanes>
                  <VScroll />
                  <HScroll />
                </ReadsArea>
              </Viewer>
            </Main>

            <Sidebar>
              <Options>
                <ZoomBar>
                  <ZoomGroup $gap={15}>
                    <SquareButton aria-label="Zoom in"><Magnifier sign="plus" /></SquareButton>
                    <SquareButton aria-label="Zoom out"><Magnifier sign="minus" /></SquareButton>
                  </ZoomGroup>
                  <ZoomLabel>
                    <ZoomInput defaultValue="66" aria-label="Zoom level" />
                    <Stepper><Chevron /><Chevron down /></Stepper>
                    %
                  </ZoomLabel>
                  <ZoomGroup $gap={15}>
                    <SquareButton aria-label="Zoom to selection"><SqueezeIcon /></SquareButton>
                    <SquareButton aria-label="Zoom to bases"><Magnifier sign="auto" /></SquareButton>
                    <SquareButton aria-label="Zoom to fit"><ExpandIcon /></SquareButton>
                  </ZoomGroup>
                </ZoomBar>
                <SectionTitle>General</SectionTitle>
                <Section $first>
                  <ColorField>
                    <label htmlFor="colors">Colors:</label>
                    <SelectWrap>
                      <Select id="colors"><option>Paired Distance</option></Select>
                      <Swatches>
                        {SWATCHES.map(([b, c]) => <Swatch key={b} $color={c}>{b}</Swatch>)}
                      </Swatches>
                      <SelectArrows><UpDown color="#fff" /></SelectArrows>
                    </SelectWrap>
                    <OptionsLink href="#colors">Options</OptionsLink>
                  </ColorField>
                </Section>
                <Section>
                  <Checks $gap={16}><Check label="Graphs" checked /></Checks>
                  <OptionsLink $raised href="#graphs">Options &gt;</OptionsLink>
                </Section>
                <Section>
                  <Checks $gap={16}><Check label="Annotations" checked /></Checks>
                  <OptionsLink $raised href="#annotations">Options &gt;</OptionsLink>
                </Section>
                <Section>
                  <Checks $gap={16}>
                    <Check label="Consensus" checked />
                    <Check label="Highlighting" checked />
                  </Checks>
                  <OptionsLink $raised href="#consensus">Options &gt;</OptionsLink>
                </Section>
                <Section>
                  <Checks $gap={16}>
                    <Check label="Complement" />
                    <Check label="Translation" />
                  </Checks>
                  <OptionsLink $raised href="#translation">Options &gt;</OptionsLink>
                </Section>
                <Section $last>
                  <Checks $gap={10}>
                    <Check label="Wrap" />
                    <Check label="Show Names" checked />
                    <ShowRow>
                      <Check label="Show" />
                      <SelectWrap $muted>
                        <Select $muted disabled aria-label="Field to show"><option>Description</option></Select>
                        <SelectArrows $muted><UpDown color="#9a9a9a" /></SelectArrows>
                      </SelectWrap>
                      <SortButton aria-label="Sort"><SortIcon /></SortButton>
                    </ShowRow>
                    <Check label="Show sequence numbers" />
                  </Checks>
                </Section>
              </Options>
              <Rail>
                <RailTab $on aria-label="General"><HomeIcon /></RailTab>
                <RailTab aria-label="Display"><MonitorIcon /></RailTab>
                <RailTab aria-label="Graphs"><BarsIcon /></RailTab>
                <RailTab aria-label="Annotations"><YellowArrowIcon /></RailTab>
                <RailTab aria-label="Predict"><PredictIcon /></RailTab>
                <RailTab aria-label="Advanced"><GearIcon size={32} /></RailTab>
                <RailTab>%</RailTab>
                <RailAction aria-label="Settings"><GearIcon dark size={30} /></RailAction>
                <RailAction aria-label="Collapse"><CollapseIcon /></RailAction>
              </Rail>
            </Sidebar>
          </Body>
          <Status>
            Alt click on a sequence position or annotation, or select a region to zoom in. Alt-shift click to zoom out.
          </Status>
        </Frame>
      </Panel>
      <BottomShade />
      <EdgeGlyph width="7" height="16" viewBox="0 0 7 16" fill="none" stroke="#555" strokeWidth="2">
        <path d="M6 1 0 8 6 15" />
      </EdgeGlyph>
    </Page>
  );
}
